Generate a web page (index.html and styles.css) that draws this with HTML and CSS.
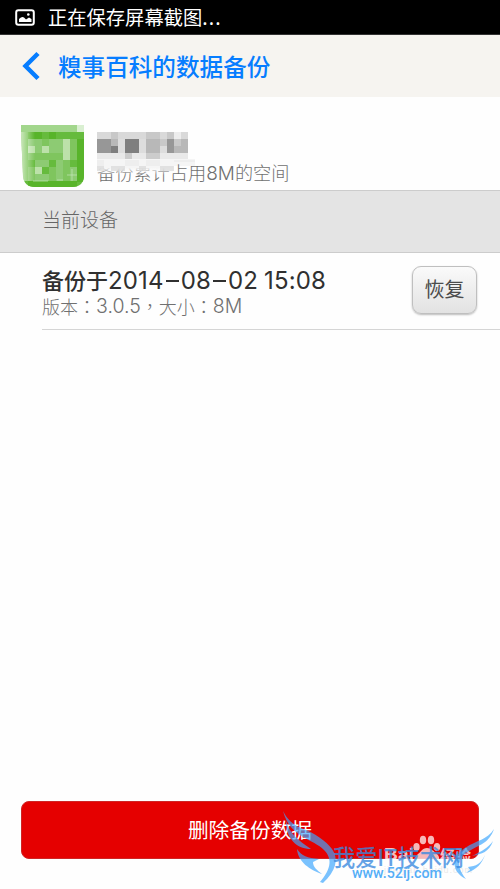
FILE: index.html
```html
<!DOCTYPE html>
<html lang="zh-CN">
<head>
<meta charset="utf-8">
<title>数据备份</title>
<link rel="stylesheet" href="styles.css">
</head>
<body>
<div class="status">
  <svg class="status-icon" width="20" height="17" viewBox="0 0 20 17"><rect x="1.2" y="1.2" width="17.6" height="14.6" rx="2.2" fill="none" stroke="#fff" stroke-width="2"/><path d="M4 13V10q3-3 5-1.500l2 2 3-2 2.500 1.500V13Z" fill="#fff"/><circle cx="13.300" cy="5.500" r="1.300" fill="#fff"/></svg>
  <span>正在保存屏幕截图<span class="dots">...</span></span>
</div>
<header class="header">
  <svg class="back" width="18" height="30" viewBox="0 0 18 30"><path d="M16 2.500 3.500 15 16 27.500" fill="none" stroke="#067dff" stroke-width="4.500"/></svg>
  <h1>糗事百科的数据备份</h1>
</header>
<section class="app">
  <svg class="app-icon" width="63" height="63" viewBox="0 0 63 63">
    <defs><linearGradient id="fade"><stop offset="0" stop-color="#fff" stop-opacity=".65"/><stop offset="1" stop-color="#fff" stop-opacity="0"/></linearGradient><clipPath id="round"><path d="M0 7V0H63V50Q63 62 51 62H14Q3 62 2 51Z"/></clipPath></defs>
    <g clip-path="url(#round)">
      <path fill="#66bb3d" d="M0 0h63v63H0z"/>
      <path fill="#a2d68c" d="M0 0h56v7H0z"/><path fill="#d9efd1" d="M56 0h7v7h-7z"/>
      <path fill="#8dcb73" d="M7 14h14v7H7zM14 21h7v7h-7zM28 14h7v14h-7zM35 14h7v14h-7zM14 35h7v7h-7zM21 35h7v7h-7zM35 35h7v14h-7zM14 49h14v7H14zM35 49h7v7h-7zM49 42h7v14h-7z"/>
      <path fill="#7fc55e" d="M21 14h7v14h-7zM7 28h21v7H7zM28 28h14v7H28zM49 14h7v21h-7zM7 42h7v14H7zM28 42h7v14h-7zM42 35h7v21h-7z"/>
      <path fill="#bce1a9" d="M7 21h7v7H7zM21 21h7v7h-7zM42 14h7v21h-7zM14 42h7v7h-7z"/>
      <path fill="#58b42a" d="M7 7h14v7H7zM28 7h7v7h-7zM56 14h7v43h-7zM7 56h49v7H7z"/>
      <path fill="url(#fade)" d="M0 7h14v49H0z"/>
    </g>
    <path d="M12 56h15M36 55h6M46 50h10M51 44v12" stroke="#c5e7b9" fill="none" opacity=".7"/>
  </svg>
  <div class="app-info">
    <svg class="app-name" width="105" height="34" viewBox="0 0 105 34">
      <path fill="#d9d9d9" d="M0 0h91v7H0z"/><path fill="#c8c8c8" d="M14 0h7v7h-7zM49 0h14v7H49zM70 0h7v7h-7z"/><path fill="#ededed" d="M77 0h7v7h-7z"/>
      <path fill="#b8b8b8" d="M0 7h91v14H0z"/><path fill="#979797" d="M0 7h14v14H0zM14 14h7v7h-7zM70 7h7v14h-7z"/><path fill="#7f7f7f" d="M28 7h14v14H28zM14 14h7v7h-7z"/><path fill="#dddddd" d="M21 7h7v14h-7zM42 7h7v14h-7zM63 7h7v14h-7z"/><path fill="#c9c9c9" d="M63 7h7v7h-7zM77 7h7v7h-7z"/>
      <path fill="#e9e9e9" d="M0 21h91v6H0z"/><path fill="#cccccc" d="M28 21h7v6h-7zM49 21h14v6H49z"/>
      <path fill="#f5f5f5" d="M0 27h98v7H0z"/>
    </svg>
    <p class="usage">备份累计占用<span class="usage-size">8M</span>的空间</p>
    <svg class="mosaic" width="105" height="15" viewBox="0 0 105 15"><defs><linearGradient id="mist" x2="0" y2="1"><stop offset=".5" stop-color="#f5f5f5"/><stop offset="1" stop-color="#fff" stop-opacity="0"/></linearGradient></defs><path fill="url(#mist)" d="M0 0h76v15H0z"/><path fill="#eee" d="M0 0h7v6H0zM28 0h14v6H28zM49 0h14v6H49zM77 0h21v2H77z"/><path fill="#d8d8d8" opacity=".7" d="M0 6h7v5H0zM14 6h14v5H14zM42 6h7v5h-7zM63 6h14v5H63z"/></svg>
  </div>
</section>
<h2 class="section">当前设备</h2>
<main>
  <div class="backup">
    <div class="details">
      <p class="date">备份于<span class="num">2014<i class="dash"></i>08<i class="dash"></i>02<span class="gap"></span>15:08</span></p>
      <p class="meta">版本<span class="mark" lang="zh-TW">：</span><span class="ver">3.0.5</span><span class="mark" lang="zh-TW">，</span>大小<span class="mark" lang="zh-TW">：</span><span class="size">8M</span></p>
    </div>
    <button class="restore">恢复</button>
  </div>
</main>
<footer>
  <button class="delete">删除备份数据</button>
</footer>
<div class="watermark">
  <svg width="230" height="99" viewBox="0 0 230 99">
    <g fill="#fff" opacity=".72"><ellipse cx="146.500" cy="57" rx="3.200" ry="4"/><ellipse cx="153" cy="50" rx="3.200" ry="4.300"/><ellipse cx="161" cy="50" rx="3.200" ry="4.300"/><ellipse cx="167" cy="57" rx="3.200" ry="4"/><path d="M157 58c-5 0-6 4-10 7-4 4 0 9 7 7h6c8 2 11-2 8-7-4-3-6-7-11-7"/></g>
    <text class="baidu" x="114" y="70" textLength="30" lengthAdjust="spacingAndGlyphs">Bai</text><text class="jingyan" x="170" y="72" textLength="31" lengthAdjust="spacingAndGlyphs">经验</text>
    <text class="domain" x="114" y="83" textLength="88">jingyan.baidu.com</text>
    <g fill="#3da7ff" opacity=".68">
      <path d="M13 21C17 29 22 34 31 38C45 43 56 51 62 59C69 69 66 81 53 93L50 92C62 78 62 68 54 60C44 49 20 48 13 21Z"/>
      <path d="M16 31C20 44 28 50 41 59C27 59 16 49 16 31Z"/>
      <path d="M27 59C32 66 37 68 49 69L43 72C43 77 47 80 52 84C40 80 28 72 27 59Z"/>
      <path d="M224 39C219 53 211 54 201 60C188 67 185 75 196 89C180 81 182 66 195 58C207 50 217 50 224 39Z"/>
      <path d="M223 51C219 62 212 64 202 66C212 61 218 58 223 51Z"/><path d="M215 65C211 74 206 76 198 77L200 80 196 83C207 80 212 73 215 65Z"/>
    </g>
    <text class="site" x="63" y="76" textLength="131" lengthAdjust="spacingAndGlyphs">我爱IT技术网</text>
    <text class="url" x="82" y="88" textLength="90" lengthAdjust="spacingAndGlyphs">www.52ij.com</text>
  </svg>
</div>
</body>
</html>
```
FILE: styles.css
```css
* { box-sizing: border-box; }
body { margin: 0; height: 889px; overflow: hidden; position: relative; display: flex; flex-direction: column; background: #fefefe; font-family: "Noto Sans CJK SC", sans-serif; }
h1, h2, p { margin: 0; font-weight: 400; white-space: nowrap; }
button { font-family: inherit; padding: 0; }
.status { height: 35px; flex: none; background: #000; border-bottom: 1px solid #333; display: flex; align-items: center; gap: 13px; padding-left: 15px; color: #fff; font-size: 19.300px; }
.status > span { line-height: 30px; }
.dots { letter-spacing: 1.200px; }
.header { height: 62px; flex: none; background: #f6f4f0; display: flex; align-items: center; gap: 18px; padding-left: 22px; }
.header h1 { color: #067dff; font-size: 23.600px; font-weight: 500; line-height: 36px; }
.app { height: 93px; flex: none; display: flex; gap: 13px; padding: 28px 0 0 21px; }
.app-info { position: relative; padding-top: 7px; }
.app-name { display: block; margin-bottom: -7px; }
.usage { color: #707070; font-size: 18.200px; line-height: 26px; font-weight: 300; }
.usage-size { font-family: Inter, sans-serif; font-size: 19px; font-weight: 300; }
.mosaic { position: absolute; left: 0; top: 35px; }
.section { height: 63px; flex: none; background: #e4e4e4; border-top: 1px solid #ccc; border-bottom: 1px solid #ccc; padding: 13px 0 0 42px; font-size: 19px; line-height: 30px; color: #666; font-weight: 300; }
main { flex: 1; }
.backup { margin-left: 42px; height: 77px; display: flex; justify-content: space-between; border-bottom: 1px solid #d5d5d5; padding: 13px 23px 0 0; }
.date { height: 29px; font-size: 22px; line-height: 26px; color: #303030; font-weight: 500; display: flex; align-items: flex-start; }
.num { font-family: Inter, sans-serif; font-size: 24px; line-height: 29px; font-weight: 400; letter-spacing: .15px; display: flex; align-items: center; }
.dash { width: 13px; height: 2px; margin: 0 2px; background: #303030; }
.gap { width: 6px; }
.meta { font-size: 18px; line-height: 23px; color: #707070; font-weight: 300; display: flex; align-items: center; }
.mark { font-family: "Noto Sans CJK TC", sans-serif; }
.ver, .size { font-family: Inter, sans-serif; font-size: 19.500px; }
.restore { width: 65px; height: 48px; border: 1px solid #bfbfbf; border-radius: 9px; background: linear-gradient(#fafafa, #e2e2e2); box-shadow: 0 1px 2px #bbb; color: #4c4c4c; font-size: 20px; line-height: 30px; padding-bottom: 2px; }
footer { flex: none; height: 88px; padding: 0 21px; }
.delete { display: block; width: 458px; height: 58px; border: 1px solid #cf2525; border-radius: 8px; background: #e50000; color: #fff; font-size: 20.700px; line-height: 30px; padding-bottom: 2px; }
.watermark { position: absolute; left: 270px; top: 790px; width: 230px; height: 99px; }
.watermark svg { display: block; }
.baidu { font: bold 17px "Liberation Sans", sans-serif; fill: #fff; opacity: .75; }
.jingyan { font: bold 16px "Noto Sans CJK SC", sans-serif; fill: #fff; opacity: .75; }
.domain { font: 9px "Liberation Sans", sans-serif; fill: #e9e9e9; }
.site { font: 500 23px "Noto Sans CJK SC", sans-serif; fill: #3989df; opacity: .78; }
.url { font: 500 14px Roboto, sans-serif; fill: #55aef7; }
```
